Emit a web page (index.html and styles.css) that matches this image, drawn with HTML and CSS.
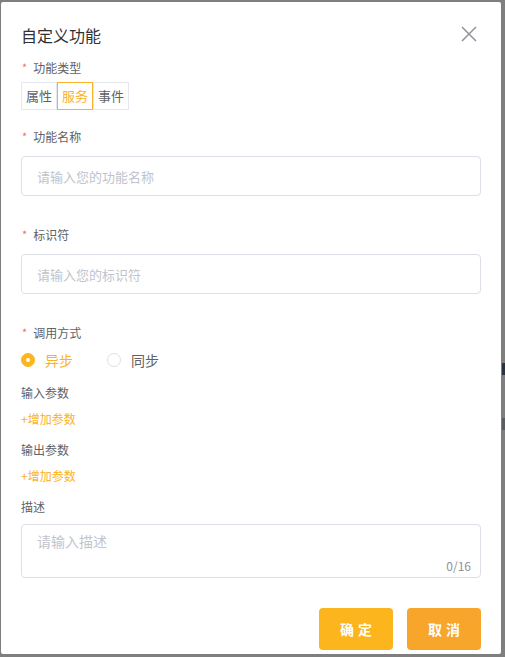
FILE: index.html
```html
<!DOCTYPE html>
<html lang="zh-CN">
<head>
<meta charset="utf-8">
<link rel="stylesheet" href="styles.css">
</head>
<body>
<div class="backdrop-frag frag-a"></div>
<div class="backdrop-frag frag-b"></div>
<div class="modal">
  <div class="header">
    <span class="title">自定义功能</span>
    <svg class="close" width="16" height="16" viewBox="0 0 16 16"><path d="M1 1L15 15M15 1L1 15" stroke="#909399" stroke-width="1.5" fill="none"/></svg>
  </div>

  <div class="label m11"><span class="req">*</span>功能类型</div>
  <div class="segments m4">
    <span class="seg">属性</span><span class="seg active">服务</span><span class="seg">事件</span>
  </div>

  <div class="label m17"><span class="req">*</span>功能名称</div>
  <input class="field m9" placeholder="请输入您的功能名称">

  <div class="label m29"><span class="req">*</span>标识符</div>
  <input class="field m9" placeholder="请输入您的标识符">

  <div class="label m29"><span class="req">*</span>调用方式</div>
  <div class="radios m7">
    <span class="radio checked"><span class="dot"></span>异步</span>
    <span class="radio"><span class="dot"></span>同步</span>
  </div>

  <div class="label m13">输入参数</div>
  <div class="add m6">+增加参数</div>
  <div class="label m11">输出参数</div>
  <div class="add m6">+增加参数</div>

  <div class="label m11">描述</div>
  <div class="textarea-wrap m7">
    <textarea class="area" placeholder="请输入描述"></textarea>
    <span class="count">0/16</span>
  </div>

  <div class="footer">
    <button class="btn ok">确定</button>
    <button class="btn cancel">取消</button>
  </div>
</div>
</body>
</html>
```

FILE: styles.css
```css
html, body {
  margin: 0;
  padding: 0;
}
body {
  background: #7f7f7f;
  width: 505px;
  height: 657px;
  overflow: hidden;
  position: relative;
  font-family: "Noto Sans CJK SC", "Noto Sans", sans-serif;
}
.backdrop-frag {
  position: absolute;
  left: 502px;
  width: 3px;
  height: 12px;
  background: #2a3440;
}
.frag-a { top: 363px; }
.frag-b { top: 418px; background: #5a5d62; }
.modal {
  position: relative;
  margin: 2px 0 0 1px;
  width: 500px;
  height: 652px;
  background: #fff;
  border-radius: 2px;
  padding: 21px 20px 0;
  box-sizing: border-box;
}
.header {
  display: flex;
  justify-content: space-between;
  align-items: center;
  height: 24px;
}
.title {
  font-size: 16px;
  line-height: 24px;
  color: #303133;
}
.close {
  margin-right: 4px;
  margin-top: -2px;
}
.label {
  font-size: 12px;
  line-height: 20px;
  color: #606266;
}
.req {
  color: #f56c6c;
  margin-left: 1px;
  margin-right: 6px;
  font-size: 11px;
  position: relative;
  top: -1px;
}
.m4 { margin-top: 4px; }
.m6 { margin-top: 6px; }
.m7 { margin-top: 7px; }
.m9 { margin-top: 9px; }
.m11 { margin-top: 11px; }
.m13 { margin-top: 13px; }
.m17 { margin-top: 17px; }
.m29 { margin-top: 29px; }
.segments {
  display: flex;
}
.seg {
  width: 36px;
  height: 28px;
  box-sizing: border-box;
  border: 1px solid #e4e7ed;
  font-size: 13px;
  line-height: 26px;
  text-align: center;
  color: #606266;
}
.seg.active {
  border-color: #fbb22a;
  color: #fbb22a;
}
.field {
  display: block;
  width: 460px;
  height: 40px;
  box-sizing: border-box;
  border: 1px solid #dcdfe6;
  border-radius: 4px;
  padding: 0 15px;
  font-family: inherit;
  font-size: 13px;
  color: #606266;
  outline: none;
}
.field::placeholder, .area::placeholder {
  color: #c0c4cc;
}
.radios {
  display: flex;
  height: 20px;
  align-items: center;
  gap: 34px;
}
.radio {
  display: flex;
  align-items: center;
  font-size: 14px;
  line-height: 20px;
  color: #606266;
}
.dot {
  width: 14px;
  height: 14px;
  box-sizing: border-box;
  border-radius: 50%;
  border: 1px solid #dcdfe6;
  background: #fff;
  margin-right: 10px;
  display: flex;
  align-items: center;
  justify-content: center;
}
.radio.checked {
  color: #fbb22a;
}
.radio.checked .dot {
  border-color: #fdb51d;
  background: #fdb51d;
}
.radio.checked .dot::after {
  content: "";
  width: 4px;
  height: 4px;
  border-radius: 50%;
  background: #fff;
}
.add {
  font-size: 12px;
  line-height: 20px;
  color: #fbb22a;
}
.textarea-wrap {
  position: relative;
  width: 460px;
  height: 54px;
}
.area {
  display: block;
  width: 460px;
  height: 54px;
  box-sizing: border-box;
  border: 1px solid #dcdfe6;
  border-radius: 4px;
  padding: 6px 15px;
  font-family: inherit;
  font-size: 14px;
  line-height: 20px;
  resize: none;
  outline: none;
}
.count {
  position: absolute;
  right: 10px;
  bottom: 4px;
  font-size: 12px;
  line-height: 16px;
  color: #909399;
}
.footer {
  margin-top: 30px;
  display: flex;
  justify-content: flex-end;
  gap: 14px;
}
.btn {
  width: 74px;
  height: 42px;
  border: none;
  border-radius: 4px;
  color: #fff;
  font-family: inherit;
  font-size: 14px;
  font-weight: bold;
  letter-spacing: 4px;
  padding: 0 0 0 4px;
}
.btn.ok { background: #fdb51d; }
.btn.cancel { background: #f7a52b; }
```
